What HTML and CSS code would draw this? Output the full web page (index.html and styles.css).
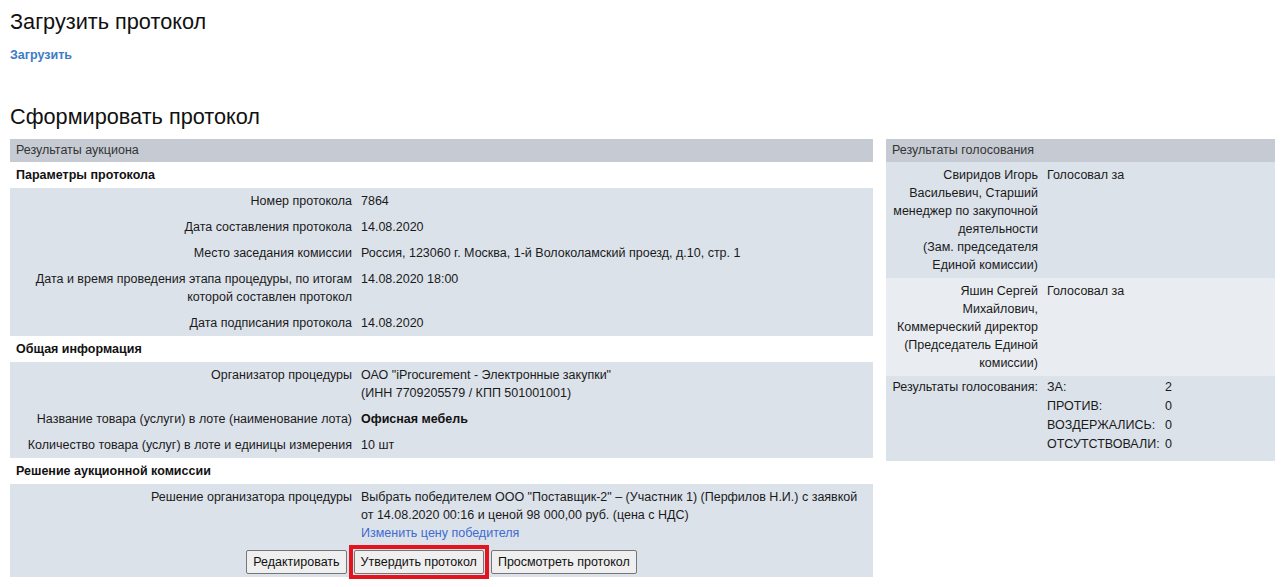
FILE: index.html
```html
<!DOCTYPE html>
<html lang="ru">
<head>
  <meta charset="UTF-8" />
  <meta name="viewport" content="width=device-width, initial-scale=1.0"/>
  <title>Протокол аукциона</title>
  <link rel="stylesheet" href="styles.css">
</head>
<body>
  <h2>Загрузить протокол</h2>
  <a class="upload-link" href="#">Загрузить</a>

  <h2 class="form-title">Сформировать протокол</h2>

  <div class="layout">
    <div class="panel panel-main">
      <div class="panel-head">Результаты аукциона</div>

      <div class="section-title">Параметры протокола</div>
      <div class="block kv">
        <div class="k">Номер протокола</div>
        <div class="v">7864</div>
        <div class="k">Дата составления протокола</div>
        <div class="v">14.08.2020</div>
        <div class="k">Место заседания комиссии</div>
        <div class="v">Россия, 123060 г. Москва, 1-й Волоколамский проезд, д.10, стр. 1</div>
        <div class="k">Дата и время проведения этапа процедуры, по итогам которой составлен протокол</div>
        <div class="v">14.08.2020 18:00</div>
        <div class="k">Дата подписания протокола</div>
        <div class="v">14.08.2020</div>
      </div>

      <div class="section-title">Общая информация</div>
      <div class="block kv">
        <div class="k">Организатор процедуры</div>
        <div class="v">ОАО "iProcurement - Электронные закупки"<br>(ИНН 7709205579 / КПП 501001001)</div>
        <div class="k">Название товара (услуги) в лоте (наименование лота)</div>
        <div class="v"><b>Офисная мебель</b></div>
        <div class="k">Количество товара (услуг) в лоте и единицы измерения</div>
        <div class="v">10 шт</div>
      </div>

      <div class="section-title">Решение аукционной комиссии</div>
      <div class="block">
        <div class="kv">
          <div class="k">Решение организатора процедуры</div>
          <div class="v">
            Выбрать победителем ООО "Поставщик-2" – (Участник 1) (Перфилов Н.И.) с заявкой от 14.08.2020 00:16 и ценой 98 000,00 руб. (цена с НДС)<br>
            <a class="change-link" href="#">Изменить цену победителя</a>
          </div>
        </div>
        <div class="actions">
          <button type="button">Редактировать</button>
          <button type="button" class="marked">Утвердить протокол</button>
          <button type="button">Просмотреть протокол</button>
        </div>
      </div>
    </div>

    <div class="panel panel-votes">
      <div class="panel-head">Результаты голосования</div>
      <div class="vote-row">
        <div class="who">Свиридов Игорь Васильевич, Старший менеджер по закупочной деятельности<br>(Зам. председателя Единой комиссии)</div>
        <div class="how">Голосовал за</div>
      </div>
      <div class="vote-row alt">
        <div class="who">Яшин Сергей Михайлович, Коммерческий директор<br>(Председатель Единой комиссии)</div>
        <div class="how">Голосовал за</div>
      </div>
      <div class="vote-row vote-total">
        <div class="who total-label">Результаты голосования:</div>
        <div class="how tally">
          <span>ЗА:</span><span>2</span>
          <span>ПРОТИВ:</span><span>0</span>
          <span>ВОЗДЕРЖАЛИСЬ:</span><span>0</span>
          <span>ОТСУТСТВОВАЛИ:</span><span>0</span>
        </div>
      </div>
    </div>
  </div>
</body>
</html>
```

FILE: styles.css
```css
body {
  margin: 0;
  padding: 10px 8px 10px 10px;
  font-family: "Liberation Sans", Arial, sans-serif;
  font-size: 12.5px;
  line-height: 18px;
  color: #1a1a1a;
  background: #fff;
}
h2 {
  font-size: 21.7px;
  font-weight: normal;
  line-height: 24px;
  margin: 0 0 12px;
  color: #111;
}
.upload-link {
  display: block;
  font-weight: bold;
  color: #3b7dc4;
  text-decoration: none;
}
.form-title {
  margin-top: 41px;
  margin-bottom: 10px;
}
.layout {
  display: flex;
  gap: 13px;
  align-items: flex-start;
}
.panel-main {
  width: 863px;
}
.panel-votes {
  width: 389px;
}
.panel-head {
  background: #c6cbd3;
  color: #333;
  padding: 0 6px;
  line-height: 23px;
}
.section-title {
  font-weight: bold;
  color: #111;
  padding: 4px 6px;
}
.block {
  background: #dce2ea;
}
.kv {
  display: grid;
  grid-template-columns: 347px 1fr;
}
.kv .k {
  text-align: right;
  padding: 4px 5px 4px 0;
}
.kv .v {
  padding: 4px;
}
.kv b {
  color: #111;
}
.change-link {
  color: #3d6bd1;
  text-decoration: none;
}
.actions {
  display: flex;
  justify-content: center;
  gap: 7px;
  padding: 4px 0 3px;
}
button {
  font-family: "Liberation Sans", Arial, sans-serif;
  font-size: 12.5px;
  height: 24px;
  padding: 0 6px;
  color: #111;
  background: #efefef;
  border: 1px solid #767676;
  border-radius: 2px;
  cursor: pointer;
}
/* red frame round the approve button */
button.marked {
  position: relative;
}
button.marked::after {
  content: "";
  position: absolute;
  top: -6px;
  left: -6px;
  right: -6px;
  bottom: -6px;
  border: 4px solid #e3141d;
  pointer-events: none;
}
.vote-row {
  display: grid;
  grid-template-columns: 157px 1fr;
  padding: 4px 0;
  background: #dce2ea;
}
.vote-row.alt {
  background: #e9edf1;
}
.vote-row .who {
  text-align: right;
  padding: 0 5px;
}
.vote-row .how {
  padding-left: 4px;
}
.vote-total {
  padding: 2px 0 8px;
}
.total-label {
  white-space: nowrap;
}
.tally {
  display: grid;
  grid-template-columns: 118px auto;
  row-gap: 1px;
  align-content: start;
}
```
